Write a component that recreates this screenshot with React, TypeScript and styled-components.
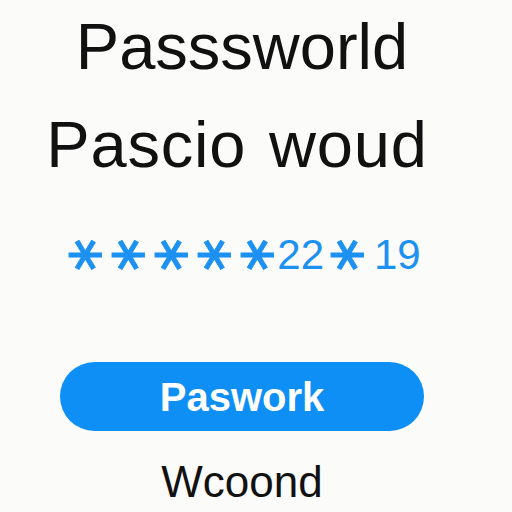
import React from 'react'
import styled, { createGlobalStyle } from 'styled-components'

const Global = createGlobalStyle`
    body {
        margin: 0;
        background: #fbfbfa;
        font-family: "Liberation Sans", Arial, sans-serif;
    }
`

const Page = styled.div`
    width: 512px;
    height: 512px;
    box-sizing: border-box;
    padding: 14px 28px 0 0;
    display: flex;
    flex-direction: column;
    align-items: center;
`

const Title = styled.h1<{ gap?: number; shift?: number }>`
    margin: ${p => p.gap || 0}px ${p => p.shift || 0}px 0 0;
    font-size: 65px;
    font-weight: normal;
    line-height: 1;
    color: #111;
    white-space: nowrap;
`

const WideTitle = styled(Title)`
    word-spacing: 4px;
    letter-spacing: 0.8px;
`

const Code = styled.div`
    margin: 57px 0 0 6px;
    display: flex;
    align-items: center;
    gap: 7px;
    color: #1c91f2;
`

const Star = styled.span`
    display: inline-flex;
    width: 36px;
    height: 30px;
    align-items: center;
    justify-content: center;
    font-family: "DejaVu Sans", sans-serif;
    font-size: 50px;
    line-height: 1;
    -webkit-text-stroke: 0.8px #1c91f2;
    transform: rotate(90deg) scaleY(1.04);
`

const Digits = styled.span<{ tight?: boolean }>`
    font-size: 42px;
    line-height: 1;
    margin-left: ${p => (p.tight ? -7 : 0)}px;
`

const Button = styled.button`
    margin-top: 86px;
    width: 364px;
    height: 69px;
    border: none;
    border-radius: 35px;
    background: #0d8ff6;
    color: #fff;
    font-family: "Liberation Sans", Arial, sans-serif;
    font-size: 40px;
    font-weight: bold;
    line-height: 1;
    padding: 0;
`

const Footer = styled.p`
    margin: 29px 0 0;
    font-size: 44px;
    line-height: 1;
    color: #111;
`

const App = () => {
    return (
        <>
            <Global />
            <Page>
                <Title>Passsworld</Title>
                <WideTitle gap={33} shift={10}>Pascio woud</WideTitle>
                <Code>
                    <Star>∗</Star>
                    <Star>∗</Star>
                    <Star>∗</Star>
                    <Star>∗</Star>
                    <Star>∗</Star>
                    <Digits tight>22</Digits>
                    <Star>∗</Star>
                    <Digits>19</Digits>
                </Code>
                <Button>Paswork</Button>
                <Footer>Wcoond</Footer>
            </Page>
        </>
    )
}

export default App
